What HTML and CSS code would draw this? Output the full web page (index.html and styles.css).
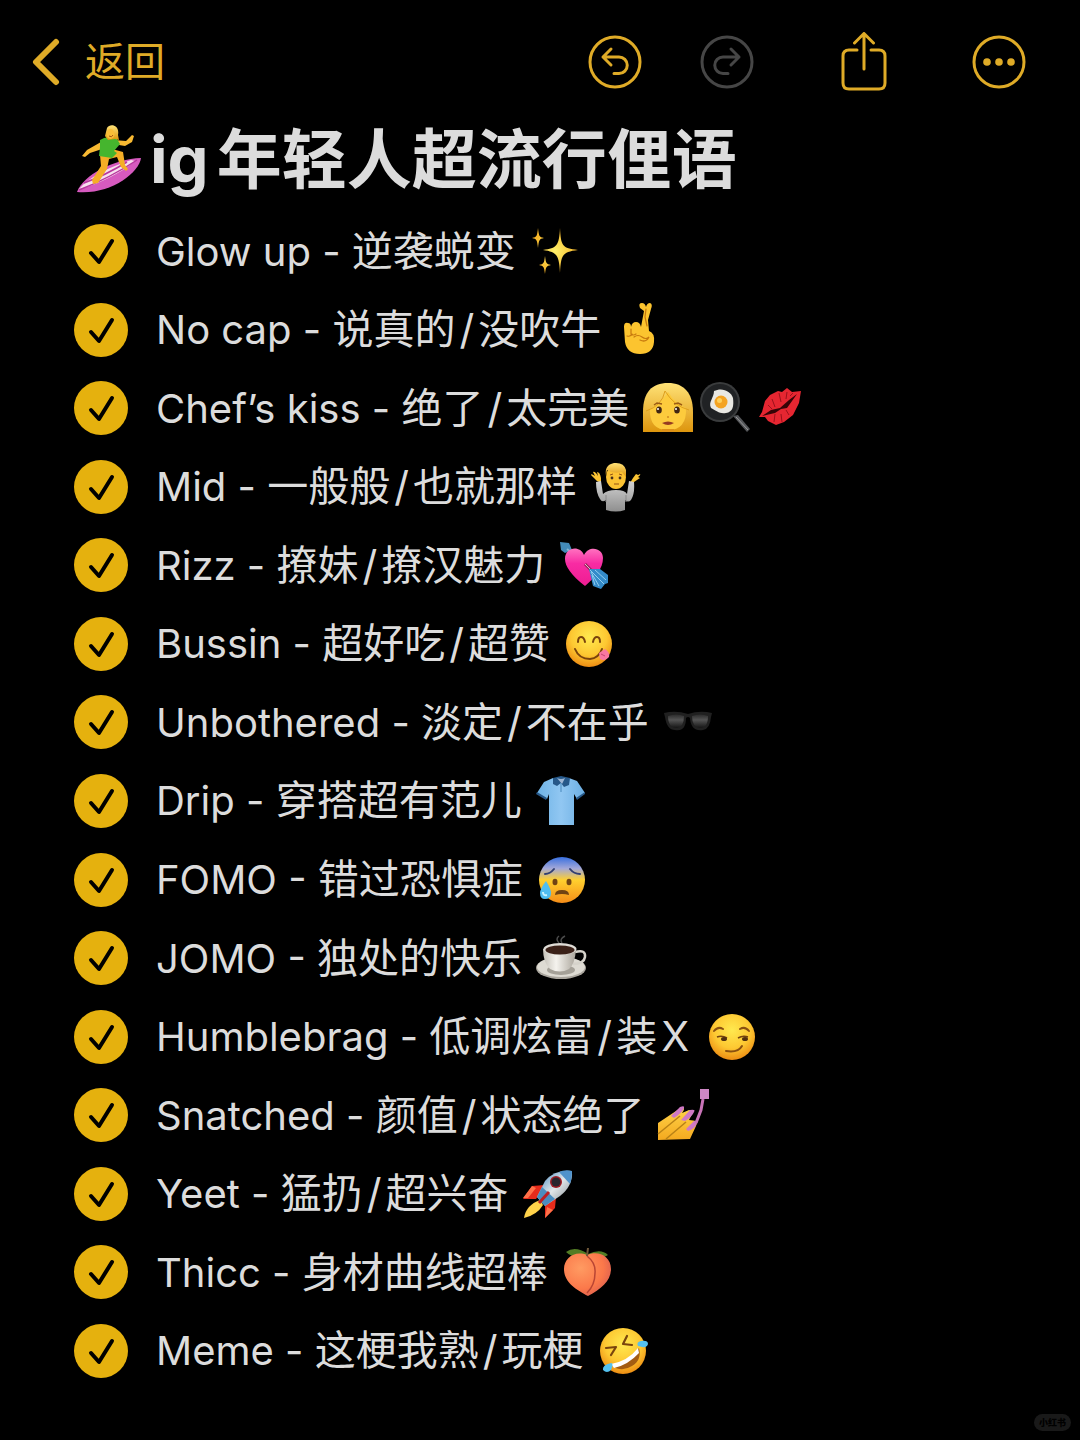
FILE: index.html
```html
<!DOCTYPE html>
<html lang="zh-CN">
<head>
<meta charset="utf-8">
<meta name="viewport" content="width=device-width, initial-scale=1">
<title>ig年轻人超流行俚语</title>
<link rel="stylesheet" href="styles.css">
</head>
<body>
<header class="toolbar">
  <button class="back" type="button">
    <svg class="chevron" viewBox="0 0 28 48" aria-hidden="true"><path d="M24 4 4 24 24 44"/></svg>
    <span>返回</span>
  </button>
  <div class="actions">
    <div class="history">
      <button class="action" type="button" aria-label="撤销"><svg viewBox="0 0 54 54" aria-hidden="true"><circle cx="27" cy="27" r="25"/><path d="M23 14 15 22l8 8M15 22h16a8 8 0 0 1 0 16.500h-5"/></svg></button>
      <button class="action disabled" type="button" aria-label="重做" disabled><svg viewBox="0 0 54 54" aria-hidden="true"><circle cx="27" cy="27" r="25"/><path d="m31 14 8 8-8 8M39 22H23a8 8 0 0 0 0 16.500h5"/></svg></button>
    </div>
    <button class="action" type="button" aria-label="共享"><svg class="share" viewBox="0 0 54 60" aria-hidden="true"><path d="M21 18h-8q-6 0-6 6v27q0 6 6 6h30q6 0 6-6V24q0-6-6-6h-8M28 37V2M18.500 11 28 1.500 37.500 11"/></svg></button>
    <button class="action" type="button" aria-label="更多"><svg viewBox="0 0 54 54" aria-hidden="true"><circle cx="27" cy="27" r="25"/><g class="dots"><circle cx="15" cy="27" r="3.800"/><circle cx="27" cy="27" r="3.800"/><circle cx="39" cy="27" r="3.800"/></g></svg></button>
  </div>
</header>

<main class="note">
  <h1 class="title">
    <svg class="surfer" viewBox="0 0 66 70" aria-hidden="true">
      <defs>
        <radialGradient id="face" cx=".5" cy=".35" r=".65"><stop offset="0" stop-color="#ffe94f"/><stop offset=".6" stop-color="#fdc832"/><stop offset="1" stop-color="#ed8d13"/></radialGradient>
        <linearGradient id="skin" x1="0" y1="0" x2="0" y2="1"><stop offset="0" stop-color="#ffd44a"/><stop offset="1" stop-color="#f4a91f"/></linearGradient>
        <linearGradient id="hair" x1="0" y1="0" x2="0" y2="1"><stop offset="0" stop-color="#ffe277"/><stop offset="1" stop-color="#dd950d"/></linearGradient>
        <linearGradient id="fear" x1="0" y1="0" x2="0" y2="1"><stop offset="0" stop-color="#386fe0"/><stop offset=".25" stop-color="#a3a8d8"/><stop offset=".5" stop-color="#ffd02f"/><stop offset="1" stop-color="#f58d18"/></linearGradient>
        <linearGradient id="grey" x1="0" y1="0" x2="0" y2="1"><stop offset="0" stop-color="#d2d2d2"/><stop offset="1" stop-color="#8f8f8f"/></linearGradient>
        <linearGradient id="pink" x1="0" y1="0" x2="0" y2="1"><stop offset="0" stop-color="#ff72c0"/><stop offset=".4" stop-color="#f82ba3"/><stop offset="1" stop-color="#ee1d92"/></linearGradient>
        <linearGradient id="blue" x1="0" y1="0" x2="1" y2="0"><stop offset="0" stop-color="#6eb3e6"/><stop offset=".5" stop-color="#91c7f2"/><stop offset="1" stop-color="#6baee2"/></linearGradient>
        <linearGradient id="lens" x1="0" y1="0" x2="0" y2="1"><stop offset="0" stop-color="#2b2b2b"/><stop offset=".4" stop-color="#555"/><stop offset="1" stop-color="#151515"/></linearGradient>
        <linearGradient id="china" x1="0" y1="0" x2="1" y2="0"><stop offset="0" stop-color="#c5c1b8"/><stop offset=".4" stop-color="#f5f3ee"/><stop offset="1" stop-color="#aaa59b"/></linearGradient>
        <radialGradient id="fruit" cx=".35" cy=".35" r=".75"><stop offset="0" stop-color="#ff9b62"/><stop offset=".65" stop-color="#fb784a"/><stop offset="1" stop-color="#d85c50"/></radialGradient>
        <linearGradient id="hull" x1="0" y1="0" x2="1" y2="1"><stop offset="0" stop-color="#337fc0"/><stop offset=".5" stop-color="#e1e6e8"/><stop offset="1" stop-color="#75818a"/></linearGradient>
        <radialGradient id="gold"><stop offset="0" stop-color="#fff06a"/><stop offset="1" stop-color="#f6b528"/></radialGradient>
      </defs>
      <path d="M1 67C7 50 38 34 65 33 63 48 34 70 1 67Z" fill="#d65abf"/>
      <path d="M3 64C14 51 34 42 55 35l4 1C45 48 21 60 3 64Z" fill="#f7dfee"/>
      <path d="M3 65Q34 53 61 35M8 58Q30 50 51 37" fill="none" stroke="#b7379d" stroke-width="1.500"/>
      <path d="m24 30 1 11-9 14 1 4 5-1 9-14 2-10 8-2 4 10 5 4 2-2-3-4-2-13-11-3Z" fill="#f5ae26"/>
      <path d="m25 17-14 8-5 6 3 1 5-4 15-5ZM38 15l12 1 6-6 2 1-2 6-7 4-12-2Z" fill="#f8b932"/>
      <path d="M24 15q7-5 17-1l3 5-6 7 3 2-5 5-13-2 1-9Z" fill="#45b52e"/>
      <path d="M31 3c3-5 13-3 11 7l1 5-4-1-7 1-3-4Z" fill="url(#hair)"/><ellipse cx="34.500" cy="9" rx="4" ry="5" fill="#f9bd38"/><path d="M33 11q3 2 4-1" stroke="#a45112" fill="none"/>
    </svg>
    <span class="heading"><span class="tag">ig</span>年轻人超流行俚语</span>
  </h1>

  <ul class="checklist">
    <li><label class="item"><input class="check" type="checkbox" checked><span><span class="term">Glow up - </span>逆袭蜕变</span>
      <span class="emojis"><svg class="emoji" viewBox="0 0 52 52" aria-hidden="true"><g fill="url(#gold)"><path d="M31 3c1 18 2 20 18 22-16 2-17 5-18 23-1-18-3-21-17-23 14-2 16-4 17-22ZM9 3c1 8 1 9 6 10-5 1-5 2-6 10-1-8-1-9-6-10 5-1 5-2 6-10ZM16 31c1 7 1 8 6 9-5 1-5 2-6 9-1-7-1-8-6-9 5-1 5-2 6-9Z"/></g></svg></span></label></li>

    <li><label class="item"><input class="check" type="checkbox" checked><span><span class="term">No cap - </span>说真的<span class="spaced">/</span>没吹牛</span>
      <span class="emojis"><svg class="emoji" viewBox="0 0 52 52" aria-hidden="true"><path d="M27 23 30 7 26 4q-2-5 2-5 3 0 4 4 1-4 4-4 3 1 1 6l-3 11 1 11q6 2 5 11-1 12-14 12-13 0-15-12l-1-15q0-5 4-4 3 0 3 4 1-5 5-5 4 0 5 5Z" fill="#fcc42f"/><path d="m32 5-1 8 2 9M17 25v5q2 2 5 0M13 32q4 1 5-2M20 33q4-3 8 0 4 3 7 0-3 6-9 3" fill="none" stroke="#c6780e" stroke-width="1.200" stroke-linecap="round"/></svg></span></label></li>

    <li><label class="item"><input class="check" type="checkbox" checked><span><span class="term">Chef’s kiss - </span>绝了<span class="spaced">/</span>太完美</span>
      <span class="emojis">
        <svg class="emoji" viewBox="0 0 52 52" aria-hidden="true"><path d="M1 50V30C1 10 10 1 26 1s25 10 25 29v20Z" fill="url(#hair)"/><path d="M8 27Q18 23 26 10q8 12 18 16 1 22-18 22T8 27Z" fill="#fdcb3d"/><path d="M20 47h12v3H20Z" fill="#dd9118"/><path d="M4 29Q20 24 23 9q9 15 24 19" fill="none" stroke="#dfa01e"/><g fill="#402513"><ellipse cx="17" cy="28" rx="2.800" ry="3.500"/><ellipse cx="35" cy="28" rx="2.800" ry="3.500"/></g><circle cx="16" cy="27" r="1" fill="#fff"/><circle cx="34" cy="27" r="1" fill="#fff"/><path d="m12 23 3-2 5 1M32 22l4-1 4 2" fill="none" stroke="#9b5b13" stroke-width="1.500"/><path d="M20 41q6-3 12 0-6 4-12 0Z" fill="#963c21"/><path d="M25 35h2" stroke="#b96b12"/></svg>
        <svg class="emoji" viewBox="0 0 52 52" aria-hidden="true"><path d="m33 34 5-1 12 14-3 3Z" fill="#55575a"/><path d="m36 35 12 13" stroke="#9a9a9a"/><circle cx="20" cy="20" r="20" fill="#3a3c3d"/><circle cx="20" cy="20" r="18" fill="#202224"/><path d="M14 9c8-4 17 0 19 7 1 8 0 14-7 15-7 1-9-2-15-5-3-6 3-10 3-17Z" fill="#e9e8e2"/><circle cx="21" cy="20" r="6.500" fill="#f4a321"/><circle cx="19.500" cy="18.500" r="2.500" fill="#ffd05a"/></svg>
        <svg class="emoji" viewBox="0 0 52 52" aria-hidden="true"><path d="m1 35 3-5 3-11 5-6 8-4 4 1 5-4 5 4 9-1-2 12-6 12-9 7-8 3-8-4-3-4Z" fill="#e62631"/><path d="m4 34 9-6 9-2 9-8 8-6-10 14-6 1-6 4Z" fill="#360407"/><path d="m14 17 3 8M21 11l2 9M29 10l-1 7M35 11l-3 3M16 40l1-8M24 40l-1-8M31 33l-3-5M10 23l4 4" stroke="#9b111b" stroke-width="1"/></svg>
      </span></label></li>

    <li><label class="item"><input class="check" type="checkbox" checked><span><span class="term">Mid - </span>一般般<span class="spaced">/</span>也就那样</span>
      <span class="emojis"><svg class="emoji" viewBox="0 0 52 52" aria-hidden="true"><path d="m11 22-4-2-6-6q0-2 4 1l-2-4q2-1 5 4l-1-4q3 0 4 6ZM40 22l3-5 7-4q1 1-2 3l2 1-6 4ZM43 17l3-4 2 1-3 4Z" fill="#fac333"/><path d="m6 21 5-1 2 13q4-4 13-4 9 0 11 4l2-13 5 1q1 12-3 18-3 3-6 0v10q-9 3-19 0V39q-4 3-6-1-4-6-4-17Z" fill="url(#grey)"/><path d="M16 34v7M36 34v7" stroke="#888"/><ellipse cx="26" cy="16" rx="10" ry="12" fill="#fcc333"/><path d="M16 15Q14 4 24 2q10-1 12 7v7l-4-5q-9 2-15-2Z" fill="url(#hair)"/><g fill="#48311b"><circle cx="22" cy="17" r="1.400"/><circle cx="30" cy="17" r="1.400"/></g><path d="m20 14 3-1M29 13l3 1M24 23h5" stroke="#945315" stroke-width="1"/></svg></span></label></li>

    <li><label class="item"><input class="check" type="checkbox" checked><span><span class="term">Rizz - </span>撩妹<span class="spaced">/</span>撩汉魅力</span>
      <span class="emojis"><svg class="emoji" viewBox="0 0 52 52" aria-hidden="true"><path d="m2 3 9 1 3 7-7 3-4-3Z" fill="#438bb8"/><path d="m9 10 6 5" stroke="#88b7d0" stroke-width="2"/><path d="M27 47C13 36 7 27 7 20 7 8 22 6 26 16 31 6 45 9 45 19c0 11-8 19-18 28Z" fill="url(#pink)"/><path d="m27 25 9 9" stroke="#9c245d" stroke-width="3"/><path d="m27 25 9 9" stroke="#e2b6c8" stroke-width="1"/><path d="m31 30 11 0 8 6v8l-3 1-4 5-8-3Z" fill="#348bc9"/><path d="m32 31 14 14M34 36l3 10M33 33l8 14M37 31l11 10" stroke="#91cef1" stroke-width="1"/></svg></span></label></li>

    <li><label class="item"><input class="check" type="checkbox" checked><span><span class="term">Bussin - </span>超好吃<span class="spaced">/</span>超赞</span>
      <span class="emojis"><svg class="emoji" viewBox="0 0 52 52" aria-hidden="true"><circle cx="26" cy="26" r="23" fill="url(#face)"/><path d="M15 24q0-5 3-5t4 5M30 24q1-5 4-5t3 5M12 31q4 10 15 10 9-1 12-10" fill="none" stroke="#79430c" stroke-width="2" stroke-linecap="round"/><path d="m36 35 6-4q5 3 4 8-4 5-9 2Z" fill="#f878a0"/><path d="m38 36 4 2" stroke="#c34774"/></svg></span></label></li>

    <li><label class="item"><input class="check" type="checkbox" checked><span><span class="term">Unbothered - </span>淡定<span class="spaced">/</span>不在乎</span>
      <span class="emojis"><svg class="emoji" viewBox="0 0 52 52" aria-hidden="true"><path d="M2 17q12-3 24 1 12-4 24-1l-1 4q-1 12-8 13-12 2-13-12-2-2-4 0 0 14-11 12-8 0-10-13Z" fill="#202020"/><path d="M6 20q8-3 16 0 0 11-7 12-9 0-9-12ZM30 20q8-3 16 0 0 12-8 12-8-1-8-12Z" fill="url(#lens)"/></svg></span></label></li>

    <li><label class="item"><input class="check" type="checkbox" checked><span><span class="term">Drip - </span>穿搭超有范儿</span>
      <span class="emojis"><svg class="emoji" viewBox="0 0 52 52" aria-hidden="true"><path d="M18 3 9 7 2 18l10 6 2-5v31h25V19l3 5 8-6-8-12-8-3-8 3Z" fill="url(#blue)"/><path d="m18 3 8-2 9 2-1 7-5 2-3-4-4 3-4-2ZM2 17l10 6-1 2-10-6ZM50 17l-9 6 1 2 8-6Z" fill="#265889"/><path d="M22 3q4 2 8 0l-3 6Z" fill="#9eb6d4"/><path d="M26 8v9" stroke="#4888bc"/></svg></span></label></li>

    <li><label class="item"><input class="check" type="checkbox" checked><span><span class="term">FOMO - </span>错过恐惧症</span>
      <span class="emojis"><svg class="emoji" viewBox="0 0 52 52" aria-hidden="true"><circle cx="26" cy="26" r="23" fill="url(#fear)"/><path d="M9 20q5 0 9-5M34 15q4 5 10 5" fill="none" stroke="#313f72" stroke-width="2" stroke-linecap="round"/><g fill="#704313"><ellipse cx="19" cy="28" rx="2.500" ry="3.300"/><ellipse cx="33" cy="28" rx="2.500" ry="3.300"/><path d="M19 41q0-5 7-5t7 5q-7-2-14 0Z"/></g><path d="M10 27Q4 35 4 39q0 6 5 6 6 0 6-6 0-4-5-12Z" fill="#50bef1"/><path d="M7 38q0 4 4 3" fill="none" stroke="#c6f3ff" stroke-width="2"/></svg></span></label></li>

    <li><label class="item"><input class="check" type="checkbox" checked><span><span class="term">JOMO - </span>独处的快乐</span>
      <span class="emojis"><svg class="emoji" viewBox="0 0 52 52" aria-hidden="true"><path d="M24 11q-4-4 0-7m3 7q-3-4 3-7" fill="none" stroke="#4b4b4b" stroke-width="1.500"/><ellipse cx="26" cy="36" rx="25" ry="11" fill="#aaa69e"/><ellipse cx="26" cy="35" rx="24" ry="10" fill="#dedbd3"/><ellipse cx="26" cy="38" rx="14" ry="5" fill="#a5a198"/><path d="M40 20q11-3 10 5-1 7-12 7" fill="none" stroke="#d6d3cb" stroke-width="2.500"/><path d="M8 17q17-5 33 0-1 15-7 20-9 5-19 0-7-7-7-20Z" fill="url(#china)"/><ellipse cx="25" cy="17" rx="16.500" ry="6" fill="#dfdcd6"/><ellipse cx="25" cy="18" rx="14.500" ry="4.500" fill="#3b2118"/></svg></span></label></li>

    <li><label class="item"><input class="check" type="checkbox" checked><span><span class="term">Humblebrag - </span>低调炫富<span class="spaced">/</span>装<span class="spaced">X</span></span>
      <span class="emojis"><svg class="emoji" viewBox="0 0 52 52" aria-hidden="true"><circle cx="26" cy="26" r="23" fill="url(#face)"/><path d="M8 20q4-5 9-2M34 18q5-3 9 2M20 40q12 2 16-5" fill="none" stroke="#8a5010" stroke-width="2" stroke-linecap="round"/><path d="M11 26q5-2 10 1M32 27q5-3 10-1" fill="none" stroke="#74420d" stroke-width="1.500"/><g fill="#51300f"><ellipse cx="18" cy="28" rx="3" ry="2"/><ellipse cx="39" cy="28" rx="3" ry="2"/></g></svg></span></label></li>

    <li><label class="item"><input class="check" type="checkbox" checked><span><span class="term">Snatched - </span>颜值<span class="spaced">/</span>状态绝了</span>
      <span class="emojis"><svg class="emoji" viewBox="0 0 52 52" aria-hidden="true"><path d="M1 51V34l15-10 9-6q4 1 0 6l7-3q5 0 2 6l-2 4q10 0 7 6l-6 13Z" fill="url(#skin)"/><path d="m1 45 22-18M9 50l20-17" fill="none" stroke="#b98216" stroke-width="1.500"/><path d="M14 27 23 18q5-2 4 1-2 5-10 10ZM24 31l9-10q6-1 4 2-2 5-9 9ZM29 40l8-8q5-1 3 2-2 6-9 8Z" fill="#cf78c5"/><path d="m39 34 5-13 2-11" fill="none" stroke="#c974b8" stroke-width="3"/><path d="M43 0h9v10h-9Z" fill="#ce87c5"/></svg></span></label></li>

    <li><label class="item"><input class="check" type="checkbox" checked><span><span class="term">Yeet - </span>猛扔<span class="spaced">/</span>超兴奋</span>
      <span class="emojis"><svg class="emoji" viewBox="0 0 52 52" aria-hidden="true"><path d="M18 32Q4 37 2 50q13-3 19-13Z" fill="#ffd24a"/><path d="m10 18 13-1-9 14H1ZM34 29l-1 11-10 10V38Z" fill="#e62b1b"/><path d="m10 18 4 2-8 10H1ZM25 39l-2 11 8-8Z" fill="#ff7149"/><path d="m15 29 8-16Q33 1 50 3q1 15-12 25L23 38Z" fill="url(#hull)"/><path d="M37 4q6-3 13-1 0 8-2 13Z" fill="#4f92cb"/><path d="m15 29 5-10 13 12-10 7Z" fill="#4c8dc0"/><circle cx="34" cy="14" r="6" fill="#a01c24"/><circle cx="34" cy="14" r="4.500" fill="#28252d"/><path d="m17 35 10-11" stroke="#bd2024" stroke-width="3"/></svg></span></label></li>

    <li><label class="item"><input class="check" type="checkbox" checked><span><span class="term">Thicc - </span>身材曲线超棒</span>
      <span class="emojis"><svg class="emoji" viewBox="0 0 52 52" aria-hidden="true"><path d="M27 8Q14-1 5 6q7 7 21 4ZM27 8q13-6 20 1-7 5-18 2Z" fill="#527c24"/><path d="M26 9C14 4 3 12 3 23c0 14 13 21 24 27 13-7 23-15 23-27C50 10 37 4 26 9Z" fill="url(#fruit)"/><path d="M26 10q9 7 8 17 0 12-8 20" fill="none" stroke="#b94534" stroke-width="1.500"/><path d="m26 10 1-8" stroke="#70583a" stroke-width="2"/></svg></span></label></li>

    <li><label class="item"><input class="check" type="checkbox" checked><span><span class="term">Meme - </span>这梗我熟<span class="spaced">/</span>玩梗</span>
      <span class="emojis"><svg class="emoji" viewBox="0 0 52 52" aria-hidden="true"><circle cx="26" cy="26" r="23" fill="url(#face)"/><path d="m9 23 10-1-5 8M30 11l-4 8 9 1" fill="none" stroke="#79450d" stroke-width="2.200" stroke-linecap="round" stroke-linejoin="round"/><path d="M14 40q17-3 28-17 3 12-7 18-11 7-21-1Z" fill="#a35c12"/><path d="M14 39q17-3 27-16l1 5Q31 40 17 43Z" fill="#fff"/><path d="M41 21q-2-4 3-5 7-1 7 3-1 5-10 2ZM14 38q3 0 0 7-4 4-8 0-1-5 8-7Z" fill="#54c2f0"/></svg></span></label></li>
  </ul>
</main>
<span class="watermark">小红书</span>
</body>
</html>
```

FILE: styles.css
```css
:root {
  --accent: #dfab27;
  --check: #e5b10e;
  --text: #dcdcdc;
}

* {
  box-sizing: border-box;
}

body {
  position: relative;
  display: flex;
  flex-direction: column;
  min-height: 100vh;
  margin: 0;
  background: #000;
  color: var(--text);
  font-family: Inter, "Noto Sans CJK SC", sans-serif;
}

.toolbar {
  display: flex;
  align-items: center;
  justify-content: space-between;
  height: 124px;
  padding: 0 54px 0 32px;
}

.back,
.action {
  display: flex;
  align-items: center;
  padding: 0;
  border: 0;
  background: none;
  color: var(--accent);
  font: inherit;
}

.back {
  gap: 25px;
  font-size: 40px;
  line-height: 48px;
}

.chevron {
  width: 28px;
  height: 48px;
  fill: none;
  stroke: currentColor;
  stroke-width: 6;
  stroke-linecap: round;
  stroke-linejoin: round;
}

.actions {
  display: flex;
  align-items: center;
  gap: 82px;
}

.history {
  display: flex;
  gap: 58px;
}

.action svg {
  width: 54px;
  height: 54px;
  fill: none;
  stroke: currentColor;
  stroke-width: 3;
  stroke-linecap: round;
  stroke-linejoin: round;
}

.action .share {
  height: 60px;
}

.action .dots {
  fill: currentColor;
  stroke: none;
}

.disabled {
  color: #464646;
}

.note {
  display: flex;
  flex: 1;
  flex-direction: column;
  padding: 0 76px 50px 74px;
}

.title {
  display: flex;
  align-items: center;
  gap: 6px;
  margin: 0 0 16px;
  font-size: 65px;
  font-weight: 700;
  line-height: 72px;
}

.surfer {
  flex: none;
  width: 70px;
  height: 70px;
}

.tag {
  margin-right: 8px;
}

.checklist {
  display: grid;
  flex: 1;
  grid-auto-rows: 1fr;
  margin: 0;
  padding: 0;
  list-style: none;
}

.item {
  display: flex;
  align-items: center;
  height: 100%;
  font-size: 41px;
  line-height: 60px;
}

.term {
  font-size: 40px;
  white-space: pre;
}

.check {
  flex: none;
  width: 54px;
  height: 54px;
  margin: 0 28px 0 0;
  border-radius: 50%;
  appearance: none;
  background: var(--check);
}

.check:checked {
  background: var(--check) url("data:image/svg+xml,%3Csvg xmlns='http://www.w3.org/2000/svg' viewBox='0 0 54 54'%3E%3Cpath d='M17 29l8 9 13-21' fill='none' stroke='%23000' stroke-width='4' stroke-linecap='round' stroke-linejoin='round'/%3E%3C/svg%3E");
}

.spaced {
  margin: 0 4px;
}

.emojis {
  display: flex;
  gap: 6px;
  margin-left: 13px;
}

.emoji {
  width: 52px;
  height: 52px;
  overflow: visible;
}

.watermark {
  position: absolute;
  right: 9px;
  bottom: 9px;
  padding: 0 5px;
  border-radius: 9px;
  background: #191919;
  color: #000;
  font-size: 9px;
  font-weight: 900;
  line-height: 17px;
}
```
